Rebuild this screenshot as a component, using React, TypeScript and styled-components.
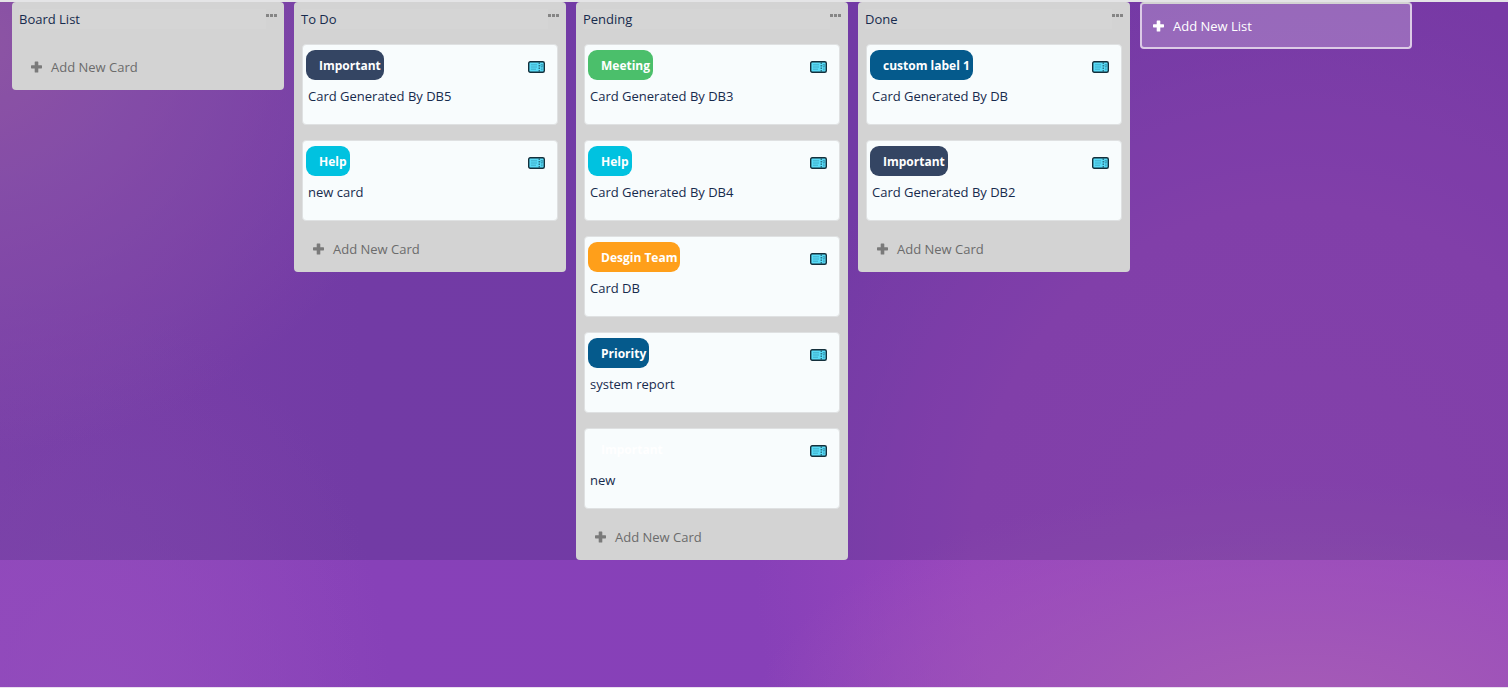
import React from "react";
import styled, { createGlobalStyle } from "styled-components";

const GlobalStyle = createGlobalStyle`
  *, *::before, *::after { box-sizing: border-box; }
  html, body { margin: 0; padding: 0; }
  body {
    font-family: "Segoe UI", "Open Sans", "Noto Sans", sans-serif;
    font-size: 13px;
    line-height: 20px;
    color: #172b4d;
  }
  button { font: inherit; cursor: pointer; }
`;

const Page = styled.div`
  min-height: 100vh;
  border-top: 2px solid #e4e4e6;
  border-bottom: 1px solid #e9e0ef;
  background:
    radial-gradient(ellipse 30% 60% at -2% 6%, #a65fb6 0%, #a05abacc 35%, #944cbb00 100%),
    radial-gradient(ellipse 36% 34% at 86% 104%, #a65cb6 0%, #a056b8cc 45%, #9a48bc00 100%),
    radial-gradient(ellipse 20% 60% at 6% 104%, #924cbc 0%, #8e48bb00 100%),
    radial-gradient(ellipse 36% 84% at 86% 80%, #9a48be 0%, #9846bd 60%, #9040b800 100%),
    linear-gradient(90deg, #8f46bb 0%, #8741b8 24%, #8740b8 55%, #8d3fb8 100%);
`;

const Board = styled.main`
  display: flex;
  align-items: flex-start;
  gap: 10px;
  padding: 0 12px;
  background: rgba(0, 25, 60, 0.15);
`;

const List = styled.section`
  flex: 0 0 272px;
  padding: 7px 8px 0;
  border-radius: 4px;
  background: #d3d3d3;
`;

const ListHeader = styled.header`
  display: flex;
  justify-content: space-between;
  align-items: flex-start;
  height: 35px;
  margin: 0 -1px;
`;

const ListTitle = styled.h2`
  flex: 1;
  margin: 0;
  font-size: 13px;
  font-weight: 400;
  background: #d5d5d5;
`;

const MenuButton = styled.button`
  display: flex;
  gap: 1px;
  padding: 5px 0;
  border: 0;
  background: none;
`;

const MenuDot = styled.span`
  width: 3px;
  height: 3px;
  background: #858585;
`;

const Cards = styled.div`
  display: flex;
  flex-direction: column;
  gap: 15px;
  padding-bottom: 5px;

  &:empty { padding: 0; }
`;

const Card = styled.article`
  height: 81px;
  padding: 5px 3px;
  border: 1px solid #dfe1e2;
  border-radius: 4px;
  background: #f8fcfd;
`;

const CardTop = styled.div`
  display: flex;
  justify-content: space-between;
  align-items: flex-end;
  padding-right: 9px;

  svg { margin-bottom: 7px; }
`;

const Label = styled.span<{ $color: string; $text?: string }>`
  padding: 1px 3px 0 13px;
  border-radius: 9px;
  background: ${(p) => p.$color};
  color: ${(p) => p.$text || "#fff"};
  font-size: 12px;
  font-weight: 700;
  line-height: 29px;
`;

const CardText = styled.p`
  margin: 6px 2px 0;
`;

const AddCardButton = styled.button`
  display: flex;
  align-items: center;
  gap: 8px;
  width: 100%;
  height: 46px;
  padding: 0 10px;
  border: 0;
  background: none;
  color: #6b6b6b;
`;

const AddListButton = styled.button`
  display: flex;
  align-items: center;
  gap: 8px;
  flex: 0 0 272px;
  height: 47px;
  padding: 0 10px;
  border: 2px solid #dccbe6;
  border-top-color: #d3d3d3;
  border-radius: 4px;
  background: rgba(255, 255, 255, 0.24);
  color: #fff;
`;

const PlusIcon = ({ color }: { color: string }) => (
  <svg width="13" height="12" viewBox="0 0 13 12" fill={color} aria-hidden="true">
    <path d="M5.3 0.5h2.4q.6 0 .6.6v3.1h3.1q.6 0 .6.6v2q0 .6-.6.6H8.3v3.5q0 .6-.6.6H5.3q-.6 0-.6-.6V7.4H1.6q-.6 0-.6-.6v-2q0-.6.6-.6h3.1V1.100q0-.6.6-.6z" />
  </svg>
);

const TicketIcon = () => (
  <svg width="17" height="12" viewBox="0 0 17 12" aria-hidden="true">
    <rect x="0.7" y="0.7" width="15.6" height="10.6" rx="1.5" fill="#58dbf7" stroke="#14303c" strokeWidth="1.4" />
    <path d="M3 3.8h6M3 6h6M3 8.2h5" stroke="#3aa3be" strokeWidth="0.8" />
    <path d="M11.200 1.400v1.600M11.200 4v1.500M11.200 6.500v1.500M11.200 9v1.600" stroke="#164454" strokeWidth="1" />
    <path d="M13 3.500h1.700v2h-1.700zM13 7h1.700M13 8.700h1.700" fill="none" stroke="#3395b0" strokeWidth="0.8" />
  </svg>
);

type CardData = { label: string; color: string; textColor?: string; text: string };

const NAVY = "#344563";
const BLUE = "#055a8c";
const CYAN = "#00c2e0";

const lists: { title: string; cards: CardData[] }[] = [
  { title: "Board List", cards: [] },
  {
    title: "To Do",
    cards: [
      { label: "Important", color: NAVY, text: "Card Generated By DB5" },
      { label: "Help", color: CYAN, text: "new card" },
    ],
  },
  {
    title: "Pending",
    cards: [
      { label: "Meeting", color: "#4bbf6b", text: "Card Generated By DB3" },
      { label: "Help", color: CYAN, text: "Card Generated By DB4" },
      { label: "Desgin Team", color: "#ff9f1a", text: "Card DB" },
      { label: "Priority", color: BLUE, text: "system report" },
      { label: "Important", color: "transparent", textColor: "#fff", text: "new" },
    ],
  },
  {
    title: "Done",
    cards: [
      { label: "custom label 1", color: BLUE, text: "Card Generated By DB" },
      { label: "Important", color: NAVY, text: "Card Generated By DB2" },
    ],
  },
];

export default function App() {
  return (
    <>
      <GlobalStyle />
      <Page>
        <Board>
          {lists.map((list) => (
            <List key={list.title}>
              <ListHeader>
                <ListTitle>{list.title}</ListTitle>
                <MenuButton type="button" aria-label={`${list.title} menu`}>
                  <MenuDot />
                  <MenuDot />
                  <MenuDot />
                </MenuButton>
              </ListHeader>
              <Cards>
                {list.cards.map((card) => (
                  <Card key={card.text}>
                    <CardTop>
                      <Label $color={card.color} $text={card.textColor}>{card.label}</Label>
                      <TicketIcon />
                    </CardTop>
                    <CardText>{card.text}</CardText>
                  </Card>
                ))}
              </Cards>
              <AddCardButton type="button">
                <PlusIcon color="#7a7a7a" />
                Add New Card
              </AddCardButton>
            </List>
          ))}
          <AddListButton type="button">
            <PlusIcon color="#fff" />
            Add New List
          </AddListButton>
        </Board>
      </Page>
    </>
  );
}
